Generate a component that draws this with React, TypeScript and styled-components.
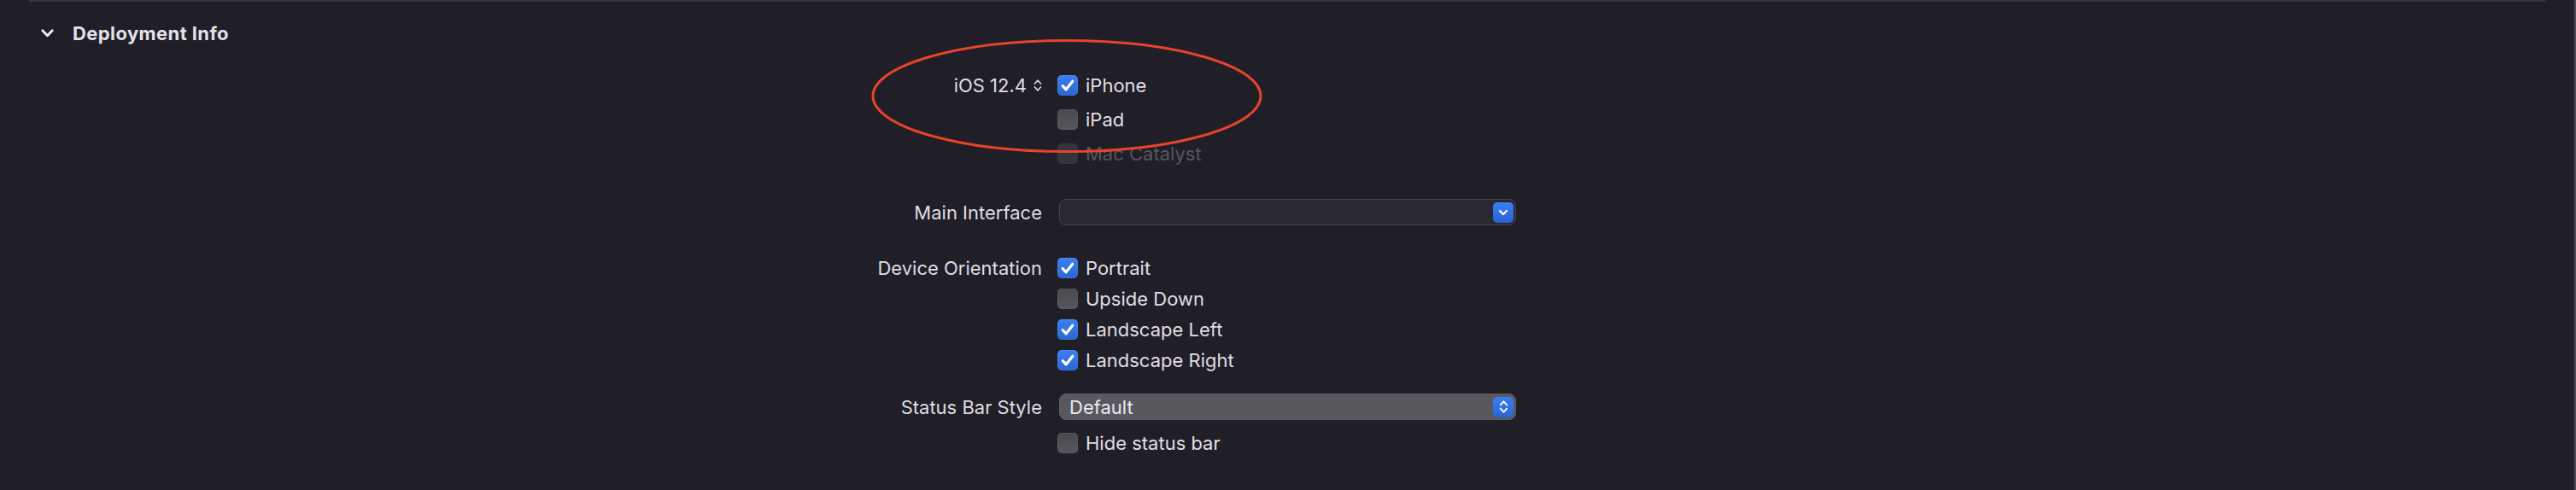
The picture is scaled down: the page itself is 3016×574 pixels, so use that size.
import React from "react";
import styled, { createGlobalStyle, css } from "styled-components";

const Global = createGlobalStyle`
  html, body { margin: 0; padding: 0; background: #201e27; }
  body {
    font-family: Inter, "Liberation Sans", "DejaVu Sans", sans-serif;
    -webkit-font-smoothing: antialiased;
  }
`;

const Page = styled.div`
  position: relative;
  width: 3016px;
  height: 574px;
  box-sizing: border-box;
  background: #201e27;
  border-right: 2px solid #4a4950;
  overflow: hidden;
  color: #dedde2;
  font-size: 22px;
`;

const TopRule = styled.div`
  margin-left: 34px;
  width: 2946px;
  height: 2px;
  background: #37353e;
`;

const Header = styled.div`
  display: flex;
  align-items: center;
  height: 40px;
  margin-top: 17px;
  padding-left: 48px;
  gap: 22px;
`;

const Title = styled.div`
  font-weight: 700;
  font-size: 22px;
  letter-spacing: 0.4px;
  color: #e3e2e7;
`;

const Form = styled.div`
  display: flex;
  flex-direction: column;
  margin-top: 21px;
`;

const Field = styled.div<{ $top: number }>`
  display: grid;
  grid-template-columns: 1220px 537px;
  column-gap: 18px;
  align-items: start;
  margin-top: ${(p) => p.$top}px;
`;

const Label = styled.div<{ $h: number }>`
  display: flex;
  align-items: center;
  justify-content: flex-end;
  gap: 8px;
  height: ${(p) => p.$h}px;
  color: #dedde2;
  white-space: nowrap;
`;

const Stack = styled.div<{ $gap?: number }>`
  display: flex;
  flex-direction: column;
  gap: ${(p) => p.$gap ?? 0}px;
`;

const Option = styled.div<{ $h: number; $disabled?: boolean }>`
  display: flex;
  align-items: center;
  gap: 9px;
  height: ${(p) => p.$h}px;
  color: ${(p) => (p.$disabled ? "#57565d" : "#e0dfe4")};
  white-space: nowrap;
`;

const Box = styled.div<{ $state: "on" | "off" | "disabled" }>`
  width: 24px;
  height: 24px;
  box-sizing: border-box;
  border-radius: 5px;
  display: flex;
  align-items: center;
  justify-content: center;
  flex: none;
  ${(p) =>
    p.$state === "on"
      ? css`
          background: linear-gradient(#3a80f2, #2b66d3);
          box-shadow: inset 0 0 0 1px rgba(255, 255, 255, 0.08);
        `
      : p.$state === "off"
      ? css`
          background: linear-gradient(#4a4950, #57565c);
          box-shadow: inset 0 0 0 1px rgba(255, 255, 255, 0.06);
        `
      : css`
          background: #35343b;
        `}
`;

const Popup = styled.div<{ $filled?: boolean }>`
  width: 535px;
  height: 31px;
  margin-left: 2px;
  box-sizing: border-box;
  border-radius: 8px;
  display: flex;
  align-items: center;
  justify-content: space-between;
  padding: 0 2px 0 11px;
  color: #ebeaef;
  ${(p) =>
    p.$filled
      ? css`
          background: #59585f;
          border: 1px solid #5f5e65;
        `
      : css`
          background: #2a2831;
          border: 1px solid #44424b;
        `}
`;

const PopupButton = styled.div`
  width: 24px;
  height: 24px;
  border-radius: 5px;
  background: linear-gradient(#3a7ff2, #2a63d4);
  display: flex;
  align-items: center;
  justify-content: center;
  flex: none;
`;

const Annotation = styled.svg`
  position: absolute;
  left: 1016px;
  top: 42px;
  width: 466px;
  height: 141px;
  pointer-events: none;
`;

const Check = () => (
  <svg width="24" height="24" viewBox="0 0 24 24">
    <path d="M6.2 12.6 L10.2 16.8 L17.8 7.2" fill="none" stroke="#fff" strokeWidth="3.2" strokeLinecap="round" strokeLinejoin="round" />
  </svg>
);

const CheckBox = ({ state }: { state: "on" | "off" | "disabled" }) => (
  <Box $state={state}>{state === "on" && <Check />}</Box>
);

const UpDown = ({ color, w, h }: { color: string; w: number; h: number }) => (
  <svg width={w} height={h} viewBox="0 0 10 16">
    <polyline points="1.5,6 5,2.2 8.5,6" fill="none" stroke={color} strokeWidth="1.8" strokeLinecap="round" strokeLinejoin="round" />
    <polyline points="1.5,10 5,13.8 8.5,10" fill="none" stroke={color} strokeWidth="1.8" strokeLinecap="round" strokeLinejoin="round" />
  </svg>
);

const Down = () => (
  <svg width="12" height="8" viewBox="0 0 12 8">
    <polyline points="2,2 6,6 10,2" fill="none" stroke="#fff" strokeWidth="2.2" strokeLinecap="round" strokeLinejoin="round" />
  </svg>
);

const Disclosure = () => (
  <svg width="15" height="10" viewBox="0 0 15 10">
    <polyline points="1.8,1.8 7.5,7.8 13.2,1.8" fill="none" stroke="#f2f2f5" strokeWidth="2.8" strokeLinecap="round" strokeLinejoin="round" />
  </svg>
);

type Opt = { label: string; state: "on" | "off" | "disabled" };

const targets: Opt[] = [
  { label: "iPhone", state: "on" },
  { label: "iPad", state: "off" },
  { label: "Mac Catalyst", state: "disabled" },
];

const orientations: Opt[] = [
  { label: "Portrait", state: "on" },
  { label: "Upside Down", state: "off" },
  { label: "Landscape Left", state: "on" },
  { label: "Landscape Right", state: "on" },
];

export default function App() {
  return (
    <>
      <Global />
      <Page>
        <TopRule />
        <Header>
          <Disclosure />
          <Title>Deployment Info</Title>
        </Header>
        <Form>
          <Field $top={0}>
            <Label $h={40}>
              iOS 12.4
              <UpDown color="#cfced4" w={10} h={16} />
            </Label>
            <Stack>
              {targets.map((o) => (
                <Option key={o.label} $h={40} $disabled={o.state === "disabled"}>
                  <CheckBox state={o.state} />
                  {o.label}
                </Option>
              ))}
            </Stack>
          </Field>
          <Field $top={33}>
            <Label $h={31}>Main Interface</Label>
            <Popup>
              <span />
              <PopupButton>
                <Down />
              </PopupButton>
            </Popup>
          </Field>
          <Field $top={32}>
            <Label $h={36}>Device Orientation</Label>
            <Stack>
              {orientations.map((o) => (
                <Option key={o.label} $h={36}>
                  <CheckBox state={o.state} />
                  {o.label}
                </Option>
              ))}
            </Stack>
          </Field>
          <Field $top={21}>
            <Label $h={31}>Status Bar Style</Label>
            <Stack $gap={9}>
              <Popup $filled>
                <span>Default</span>
                <PopupButton>
                  <UpDown color="#fff" w={11} h={17} />
                </PopupButton>
              </Popup>
              <Option $h={36}>
                <CheckBox state="off" />
                Hide status bar
              </Option>
            </Stack>
          </Field>
        </Form>
        <Annotation viewBox="0 0 466 141">
          <ellipse cx="233" cy="70.5" rx="227" ry="65" fill="none" stroke="#e5432c" strokeWidth="3" />
        </Annotation>
      </Page>
    </>
  );
}
